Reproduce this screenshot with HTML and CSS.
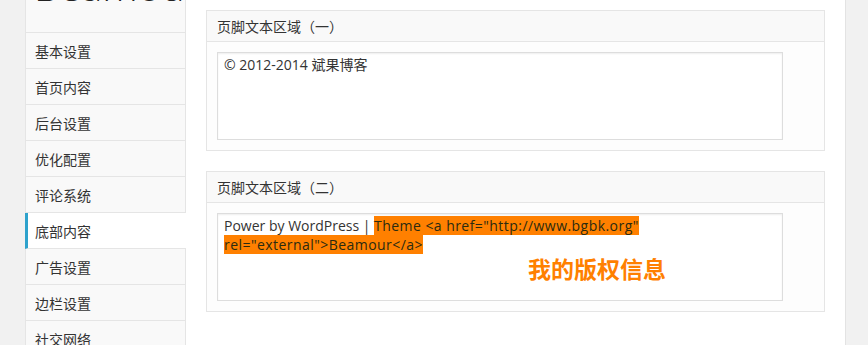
FILE: index.html
```html
<!DOCTYPE html>
<html lang="zh-CN">
<head>
  <meta charset="utf-8">
  <title>主题设置</title>
  <link rel="stylesheet" href="styles.css">
</head>
<body>
  <div class="wrap">
    <div class="side">
      <div class="logo"><span>Beamour</span></div>
      <a class="item">基本设置</a>
      <a class="item">首页内容</a>
      <a class="item">后台设置</a>
      <a class="item">优化配置</a>
      <a class="item">评论系统</a>
      <a class="item active">底部内容</a>
      <a class="item">广告设置</a>
      <a class="item">边栏设置</a>
      <a class="item">社交网络</a>
    </div>
    <div class="main">
      <div class="panel">
        <div class="panel-head">页脚文本区域（一）</div>
        <div class="panel-body">
          <div class="field">© 2012-2014 斌果博客</div>
        </div>
      </div>
      <div class="panel">
        <div class="panel-head">页脚文本区域（二）</div>
        <div class="panel-body">
          <div class="field">Power by WordPress | <span class="mark">Theme &lt;a href="http://www.bgbk.org" </span><br><span class="mark">rel="external"&gt;Beamour&lt;/a&gt;</span></div>
          <div class="note">我的版权信息</div>
        </div>
      </div>
    </div>
  </div>
</body>
</html>
```

FILE: styles.css
```css
html, body {
  margin: 0;
  height: 100%;
  overflow: hidden;
}
body {
  background: #f1f1f1;
  font-family: "Open Sans", "Noto Sans CJK SC", sans-serif;
  font-size: 14px;
  color: #333;
}
.wrap {
  display: flex;
  padding-left: 25px;
  height: 100%;
}
.side {
  width: 161px;
  flex: 0 0 161px;
  overflow: hidden;
}
.logo {
  height: 33px;
  box-sizing: border-box;
  background: #f9f9f9;
  border: 1px solid #e5e5e5;
  border-top: none;
  overflow: hidden;
}
.logo span {
  display: block;
  margin: -34px 0 0 8px;
  font-size: 40px;
  line-height: 40px;
  font-weight: 300;
  color: #222;
  white-space: nowrap;
}
.item {
  display: flex;
  align-items: center;
  height: 36px;
  box-sizing: border-box;
  padding-left: 9px;
  background: #f9f9f9;
  border: 1px solid #e5e5e5;
  border-top: none;
  font-family: "Noto Sans CJK SC", sans-serif;
  font-size: 14px;
  color: #333;
}
.item.active {
  background: #fff;
  border-left: 3px solid #2ea2cc;
  border-right: none;
  padding-left: 7px;
}
.main {
  width: 660px;
  flex: 0 0 660px;
  box-sizing: border-box;
  background: #fff;
  border-right: 1px solid #e3e3e3;
  padding: 10px 20px 0 20px;
}
.panel {
  border: 1px solid #e5e5e5;
  margin-bottom: 20px;
  background: #fdfdfd;
}
.panel-head {
  height: 30px;
  line-height: 30px;
  padding-left: 10px;
  background: #f9f9f9;
  border-bottom: 1px solid #e5e5e5;
  font-family: "Noto Sans CJK SC", sans-serif;
  font-size: 14px;
  color: #333;
}
.panel-body {
  position: relative;
  padding: 10px;
}
.field {
  width: 566px;
  height: 88px;
  box-sizing: border-box;
  padding: 2px 6px;
  background: #fff;
  border: 1px solid #dddddd;
  box-shadow: inset 0 1px 2px rgba(0, 0, 0, 0.07);
  font-size: 14px;
  line-height: 19px;
  color: #333;
}
.mark {
  background: #ff8000;
  color: #2b2b10;
  letter-spacing: 0.45px;
}
.note {
  position: absolute;
  left: 321px;
  top: 48px;
  font-family: "Noto Sans CJK SC", sans-serif;
  font-size: 23px;
  font-weight: bold;
  color: #ff8000;
}
```
